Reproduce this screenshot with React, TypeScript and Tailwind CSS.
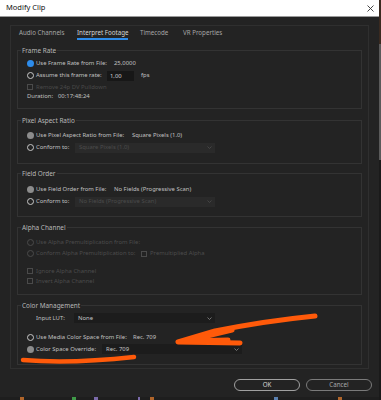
import React from 'react';

type RadioKind = 'on' | 'off' | 'gray' | 'dim';

const FONT = { fontFamily: '"Noto Sans", "Open Sans", sans-serif' };

function Radio({ kind }: { kind: RadioKind }) {
  if (kind === 'on')
    return <span className="w-[7px] h-[7px] rounded-full bg-[#2d8ceb] shrink-0" />;
  if (kind === 'gray')
    return <span className="w-[7px] h-[7px] rounded-full bg-[#8c8c8c] shrink-0" />;
  if (kind === 'dim')
    return <span className="w-[7px] h-[7px] rounded-full border border-[#4a4a4a] shrink-0" />;
  return <span className="w-[7px] h-[7px] rounded-full border-[1.5px] border-[#c8c8c8] shrink-0" />;
}

function Check() {
  return <span className="w-[6px] h-[6px] border border-[#4a4a4a] shrink-0" />;
}

function Chevron({ color }: { color: string }) {
  return (
    <svg width="5" height="3" viewBox="0 0 5 3" className="shrink-0">
      <path d="M0.5 0.5 L2.5 2.5 L4.5 0.5" fill="none" stroke={color} strokeWidth="0.8" />
    </svg>
  );
}

function Dropdown({
  value,
  width,
  disabled,
}: {
  value: string;
  width: string;
  disabled?: boolean;
}) {
  return (
    <div
      className={`${width} h-[10px] shrink-0 flex items-center justify-between pl-[4px] pr-[3px] ${
        disabled ? 'bg-[#2a2a2a] text-[#4c4c4c]' : 'bg-[#1c1c1c] text-[#c4c4c4]'
      }`}
    >
      <span>{value}</span>
      <Chevron color={disabled ? '#4c4c4c' : '#8a8a8a'} />
    </div>
  );
}

function Label({ width, children }: { width?: string; children: React.ReactNode }) {
  return <span className={`ml-[2px] shrink-0 ${width ?? ''}`}>{children}</span>;
}

function Section({
  title,
  height,
  className,
  children,
}: {
  title: string;
  height: string;
  className: string;
  children: React.ReactNode;
}) {
  return (
    <div className={`${height} ${className} border border-[#333333] flex flex-col pl-[9px]`}>
      <div className="-mt-[5px] -ml-[6px] h-[9px] leading-[9px] w-fit px-[1px] bg-[#232323] text-[#b8b8b8] text-[6.4px]">
        {title}
      </div>
      {children}
    </div>
  );
}

function Tab({ label, width, active }: { label: string; width: string; active?: boolean }) {
  return (
    <div className={`${width} shrink-0`}>
      <div className="inline-flex flex-col">
        <span className={`h-[9px] leading-[9px] ${active ? 'text-[#d6d6d6]' : 'text-[#a6a6a6]'}`}>
          {label}
        </span>
        {active && <span className="mt-[1px] h-[1.5px] bg-[#2d8ceb]" />}
      </div>
    </div>
  );
}

export default function App() {
  return (
    <div
      className="w-[381px] h-[400px] bg-[#232323] relative overflow-hidden flex text-[5.9px] whitespace-nowrap text-[#c0c0c0]"
      style={FONT}
    >
      <div className="w-[379px] h-full flex flex-col">
        {/* title bar */}
        <div className="h-[17px] shrink-0 bg-white border-b border-[#9a9a9a] flex items-center justify-between pl-[6px] pr-[5px]">
          <span className="text-[7.5px] text-[#111111]">Modify Clip</span>
          <svg width="7" height="7" viewBox="0 0 7 7">
            <path d="M0.5 0.5 L6.5 6.5 M6.5 0.5 L0.5 6.5" stroke="#333333" strokeWidth="0.9" />
          </svg>
        </div>

        <div className="px-[10px] pt-[8px] flex flex-col">
          <div className="h-[344px] border border-[#2f2f2f] flex flex-col px-[6px]">
            {/* tabs */}
            <div className="flex pt-[2px] pl-[2px] h-[14px] text-[6.2px]">
              <Tab label="Audio Channels" width="w-[58px]" />
              <Tab label="Interpret Footage" width="w-[63px]" active />
              <Tab label="Timecode" width="w-[43px]" />
              <Tab label="VR Properties" width="w-[50px]" />
            </div>

            <Section title="Frame Rate" height="h-[59px]" className="mt-[10px]">
              <div className="h-[12px] mt-[2px] flex items-center">
                <Radio kind="on" />
                <Label width="w-[78px]">Use Frame Rate from File:</Label>
                <span>25,0000</span>
              </div>
              <div className="h-[13px] flex items-center">
                <Radio kind="off" />
                <Label width="w-[71px]">Assume this frame rate:</Label>
                <span className="w-[27px] h-[10px] bg-[#171717] pl-[3px] leading-[10px] text-[#d0d0d0]">
                  1,00
                </span>
                <span className="ml-[7px]">fps</span>
              </div>
              <div className="h-[10px] flex items-center text-[#4a4a4a]">
                <Check />
                <span className="ml-[3px]">Remove 24p DV Pulldown</span>
              </div>
              <div className="h-[9px] flex items-center">
                <span className="w-[31px]">Duration:</span>
                <span>00:17:48:24</span>
              </div>
            </Section>

            <Section title="Pixel Aspect Ratio" height="h-[44px]" className="mt-[11px]">
              <div className="h-[12px] mt-[4px] flex items-center">
                <Radio kind="gray" />
                <Label width="w-[96px]">Use Pixel Aspect Ratio from File:</Label>
                <span>Square Pixels (1.0)</span>
              </div>
              <div className="h-[13px] flex items-center">
                <Radio kind="off" />
                <Label width="w-[39px]">Conform to:</Label>
                <Dropdown value="Square Pixels (1.0)" width="w-[140px]" disabled />
              </div>
            </Section>

            <Section title="Field Order" height="h-[44px]" className="mt-[9px]">
              <div className="h-[12px] mt-[5px] flex items-center">
                <Radio kind="gray" />
                <Label width="w-[78px]">Use Field Order from File:</Label>
                <span>No Fields (Progressive Scan)</span>
              </div>
              <div className="h-[13px] flex items-center">
                <Radio kind="off" />
                <Label width="w-[39px]">Conform to:</Label>
                <Dropdown value="No Fields (Progressive Scan)" width="w-[140px]" disabled />
              </div>
            </Section>

            <Section title="Alpha Channel" height="h-[68px]" className="mt-[10px]">
              <div className="h-[12px] mt-[4px] flex items-center text-[#4c4c4c]">
                <Radio kind="dim" />
                <Label>Use Alpha Premultiplication from File:</Label>
              </div>
              <div className="h-[11px] flex items-center text-[#4c4c4c]">
                <Radio kind="dim" />
                <Label width="w-[105px]">Conform Alpha Premultiplication to:</Label>
                <Check />
                <span className="ml-[3px]">Premultiplied Alpha</span>
              </div>
              <div className="h-[10px] mt-[7px] flex items-center text-[#4c4c4c]">
                <Check />
                <span className="ml-[3px]">Ignore Alpha Channel</span>
              </div>
              <div className="h-[10px] flex items-center text-[#4c4c4c]">
                <Check />
                <span className="ml-[3px]">Invert Alpha Channel</span>
              </div>
            </Section>

            <Section title="Color Management" height="h-[60px]" className="mt-[10px]">
              <div className="h-[12px] mt-[2px] flex items-center pl-[9px]">
                <span className="w-[38px] shrink-0">Input LUT:</span>
                <Dropdown value="None" width="w-[141px]" />
              </div>
              <div className="h-[12px] mt-[7px] flex items-center">
                <Radio kind="off" />
                <Label width="w-[97px]">Use Media Color Space from File:</Label>
                <span>Rec. 709</span>
              </div>
              <div className="h-[12px] flex items-center">
                <Radio kind="gray" />
                <Label width="w-[66px]">Color Space Override:</Label>
                <Dropdown value="Rec. 709" width="w-[140px]" />
              </div>
            </Section>
          </div>
        </div>

        {/* buttons */}
        <div className="mt-[10px] h-[12px] flex justify-end gap-[6px] pr-[7px]">
          <button className="w-[66px] h-[12px] rounded-full border border-[#a0a0a0] text-[#d8d8d8] text-[6.2px] leading-[10px]">
            OK
          </button>
          <button className="w-[66px] h-[12px] rounded-full border border-[#7a7a7a] text-[#a8a8a8] text-[6.2px] leading-[10px]">
            Cancel
          </button>
        </div>

        {/* timeline peeking below */}
        <div className="mt-auto h-[3px] flex items-end bg-[#1e1e1e]">
          <span className="ml-[20px] w-[4px] h-[3px] bg-[#b0652a]" />
          <span className="ml-[48px] w-[4px] h-[3px] bg-[#3f9a48]" />
          <span className="ml-[18px] w-[4px] h-[3px] bg-[#7a6aaa]" />
          <span className="ml-[40px] w-[2px] h-[3px] bg-[#7a6aaa]" />
          <span className="ml-[10px] w-[4px] h-[3px] bg-[#b0652a]" />
          <span className="ml-[120px] w-[4px] h-[3px] bg-[#5a80b0]" />
          <span className="ml-[60px] w-[4px] h-[3px] bg-[#b0652a]" />
        </div>
      </div>

      {/* window behind, right edge */}
      <div className="w-[2px] h-full flex flex-col">
        <span className="h-[44px] bg-[#3a2a20]" />
        <span className="h-[116px] bg-[#5a5a5a]" />
        <span className="flex-1 bg-[#1a1a1a]" />
      </div>

      {/* hand-drawn orange annotation */}
      <svg
        className="absolute inset-0 pointer-events-none"
        width="381"
        height="400"
        viewBox="0 0 381 400"
      >
        <g fill="none" stroke="#ff5a0a" strokeLinecap="round" strokeLinejoin="round">
          <path d="M23 360 Q 70 364 134 357" strokeWidth="4.5" />
          <path d="M315 316 C 285 319, 245 325, 215 331 L 178 342 L 240 343" strokeWidth="5" />
          <path d="M232 330 L 186 341 L 228 340" strokeWidth="5" />
        </g>
      </svg>
    </div>
  );
}
